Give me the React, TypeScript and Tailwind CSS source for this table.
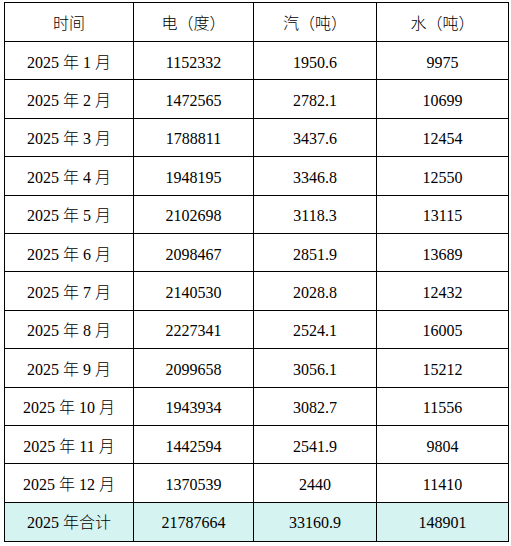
const rows = [
  ["2025 年 1 月", "1152332", "1950.6", "9975"],
  ["2025 年 2 月", "1472565", "2782.1", "10699"],
  ["2025 年 3 月", "1788811", "3437.6", "12454"],
  ["2025 年 4 月", "1948195", "3346.8", "12550"],
  ["2025 年 5 月", "2102698", "3118.3", "13115"],
  ["2025 年 6 月", "2098467", "2851.9", "13689"],
  ["2025 年 7 月", "2140530", "2028.8", "12432"],
  ["2025 年 8 月", "2227341", "2524.1", "16005"],
  ["2025 年 9 月", "2099658", "3056.1", "15212"],
  ["2025 年 10 月", "1943934", "3082.7", "11556"],
  ["2025 年 11 月", "1442594", "2541.9", "9804"],
  ["2025 年 12 月", "1370539", "2440", "11410"],
];

const font = "font-['Liberation_Serif','Noto_Sans_CJK_SC',serif]";

export default function App() {
  return (
    <div className="bg-white w-[511px] h-[546px] pt-[2px] pl-[4px]">
      <table className={`table-fixed border-collapse w-[504px] text-[16px] font-light text-black ${font}`}>
        <colgroup>
          <col className="w-[129px]" />
          <col className="w-[120px]" />
          <col className="w-[123px]" />
          <col className="w-[132px]" />
        </colgroup>
        <thead>
          <tr className="h-[39px]">
            {["时间", "电（度）", "汽（吨）", "水（吨）"].map((h) => (
              <th key={h} className="border border-black font-light text-center align-middle pt-[3px]">
                {h}
              </th>
            ))}
          </tr>
        </thead>
        <tbody>
          {rows.map((r) => (
            <tr key={r[0]} className="h-[38.4px]">
              {r.map((c, i) => (
                <td key={i} className="border border-black text-center align-middle pt-[4px]">
                  {c}
                </td>
              ))}
            </tr>
          ))}
          <tr className="h-[39px] bg-[#d4f3f1]">
            {["2025 年合计", "21787664", "33160.9", "148901"].map((c, i) => (
              <td key={i} className="border border-black text-center align-middle pt-[3px]">
                {c}
              </td>
            ))}
          </tr>
        </tbody>
      </table>
    </div>
  );
}
